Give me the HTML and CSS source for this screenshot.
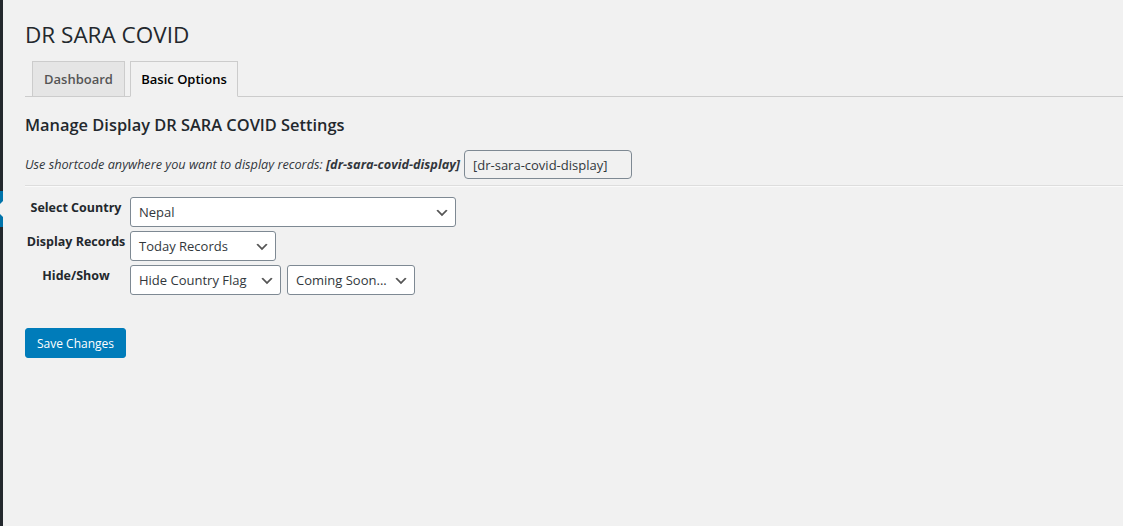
FILE: index.html
```html
<!DOCTYPE html>
<html lang="en">
<head>
<meta charset="utf-8">
<title>DR SARA COVID</title>
<link rel="stylesheet" href="styles.css">
</head>
<body>
<aside class="adminmenu">
  <div class="menu-current"></div>
</aside>
<main class="wrap">
  <h1 class="page-title">DR SARA COVID</h1>
  <nav class="nav-tabs">
    <a class="nav-tab">Dashboard</a>
    <a class="nav-tab nav-tab-active">Basic Options</a>
  </nav>
  <h2 class="section-title">Manage Display DR SARA COVID Settings</h2>
  <div class="shortcode-row">
    <p class="shortcode-note">Use shortcode anywhere you want to display records: <strong>[dr-sara-covid-display]</strong></p>
    <input class="shortcode-input" type="text" value="[dr-sara-covid-display]" readonly>
  </div>
  <hr class="divider">
  <form class="settings-form">
    <div class="form-row">
      <div class="form-label">Select Country</div>
      <div class="form-fields">
        <div class="select select-wide">Nepal</div>
      </div>
    </div>
    <div class="form-row">
      <div class="form-label">Display Records</div>
      <div class="form-fields">
        <div class="select select-records">Today Records</div>
      </div>
    </div>
    <div class="form-row">
      <div class="form-label">Hide/Show</div>
      <div class="form-fields">
        <div class="select select-flag">Hide Country Flag</div>
        <div class="select select-soon">Coming Soon...</div>
      </div>
    </div>
    <div class="submit-row">
      <button type="button" class="button-primary">Save Changes</button>
    </div>
  </form>
</main>
</body>
</html>
```

FILE: styles.css
```css
html, body {
  margin: 0;
  padding: 0;
}
body {
  display: flex;
  min-height: 526px;
  background: #f1f1f1;
  color: #23282d;
  font-family: "Open Sans", "Noto Sans", "Liberation Sans", sans-serif;
  font-size: 12px;
  overflow: hidden;
}
.adminmenu {
  width: 3px;
  flex-shrink: 0;
  background: #23282d;
}
.menu-current {
  margin-top: 191px;
  height: 36px;
  background: #0073aa;
  position: relative;
}
.menu-current::after {
  content: "";
  position: absolute;
  right: 0;
  top: 50%;
  margin-top: -8px;
  border: 8px solid transparent;
  border-right-color: #f1f1f1;
}
.wrap {
  flex: 1;
  padding-left: 22px;
  min-width: 0;
}
.page-title {
  margin: 0;
  padding: 20px 0 0 0;
  font-size: 22.5px;
  font-weight: 400;
  line-height: 30px;
  color: #23282d;
}
.nav-tabs {
  display: flex;
  align-items: flex-end;
  margin-top: 11px;
  border-bottom: 1px solid #ccc;
  height: 35px;
}
.nav-tab {
  margin-left: 7px;
  margin-bottom: -1px;
  padding: 5px 10px;
  font-size: 13px;
  font-weight: 600;
  line-height: 24px;
  border: 1px solid #ccc;
  background: #e5e5e5;
  color: #555;
  box-sizing: border-box;
  height: 36px;
}
.nav-tab:first-child {
  width: 93px;
  text-align: center;
  padding: 5px 0;
}
.nav-tab-active {
  background: #f1f1f1;
  border-bottom-color: #f1f1f1;
  color: #000;
  width: 108px;
  text-align: center;
  padding: 5px 0;
  margin-left: 5px;
}
.section-title {
  margin: 17px 0 0 0;
  font-size: 16.4px;
  font-weight: 600;
  line-height: 22px;
  color: #23282d;
}
.shortcode-row {
  display: flex;
  align-items: center;
  margin-top: 14px;
  gap: 4px;
}
.shortcode-note {
  margin: 0;
  font-size: 12.7px;
  font-style: italic;
  color: #32373c;
  line-height: 18px;
  position: relative;
  top: -1px;
}
.shortcode-note strong {
  font-weight: 700;
}
.shortcode-input {
  width: 168px;
  height: 29px;
  box-sizing: border-box;
  border: 1px solid #7e8993;
  border-radius: 4px;
  background: #f1f1f1;
  padding: 0 8px;
  font-family: inherit;
  font-size: 13px;
  color: #32373c;
}
.divider {
  margin: 6px 0 0 0;
  border: 0;
  border-top: 1px solid #ddd;
  border-bottom: 1px solid #fafafa;
  height: 0;
}
.settings-form {
  margin-top: 10px;
}
.form-row {
  display: flex;
  align-items: flex-start;
  margin-bottom: 4px;
}
.form-label {
  width: 104px;
  flex-shrink: 0;
  text-align: center;
  font-size: 12.5px;
  font-weight: 700;
  color: #23282d;
  line-height: 18px;
  padding-top: 2px;
  margin-left: -1px;
}
.form-fields {
  display: flex;
  gap: 6px;
  margin-left: 2px;
}
.select {
  box-sizing: border-box;
  height: 30px;
  line-height: 28px;
  border: 1px solid #7e8993;
  border-radius: 3px;
  background: #fff url("data:image/svg+xml;utf8,<svg xmlns='http://www.w3.org/2000/svg' width='20' height='20' viewBox='0 0 20 20'><path d='M5 6l5 5 5-5 2 1-7 7-7-7z' fill='%23555'/></svg>") no-repeat right 5px top 55%;
  background-size: 16px 16px;
  padding: 0 24px 0 8px;
  font-size: 13px;
  color: #32373c;
  white-space: nowrap;
  overflow: hidden;
}
.select-wide { width: 326px; }
.select-records { width: 146px; }
.select-flag { width: 151px; }
.select-soon { width: 128px; }
.submit-row {
  margin-top: 33px;
}
.button-primary {
  width: 101px;
  height: 30px;
  box-sizing: border-box;
  background: #007cba;
  border: 1px solid #007cba;
  border-radius: 3px;
  color: #fff;
  font-family: inherit;
  font-size: 12px;
  padding: 0;
  cursor: pointer;
}
```
